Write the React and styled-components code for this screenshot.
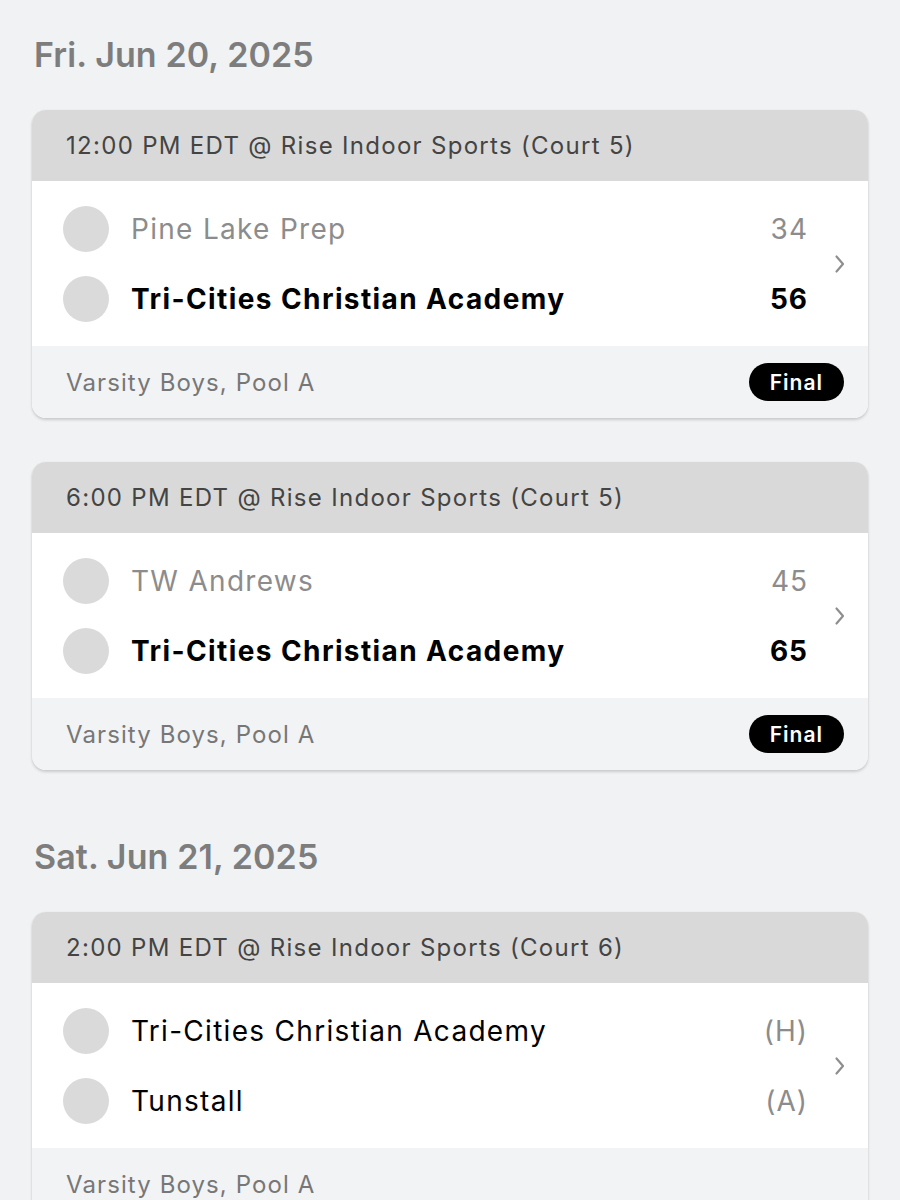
import React from 'react';
import styled, { createGlobalStyle } from 'styled-components';

const GlobalStyle = createGlobalStyle`
  html, body {
    margin: 0;
    padding: 0;
    background: #f1f2f4;
    font-family: 'Inter', 'Liberation Sans', sans-serif;
  }
`;

const Page = styled.div`
  display: flex;
  flex-direction: column;
  gap: 67px;
  padding: 35px 32px 40px 32px;
`;

const Day = styled.section`
  display: flex;
  flex-direction: column;
`;

const DayTitle = styled.h2`
  margin: 0 0 35px 2px;
  font-size: 34px;
  line-height: 40px;
  font-weight: 600;
  color: #7d7d7d;
  letter-spacing: 0.1px;
`;

const CardList = styled.div`
  display: flex;
  flex-direction: column;
  gap: 44px;
`;

const Card = styled.div`
  border-radius: 14px;
  overflow: hidden;
  background: #fff;
  box-shadow: 0 2px 3px rgba(0, 0, 0, 0.16), 0 0 1px rgba(0, 0, 0, 0.12);
`;

const CardHeader = styled.div`
  display: flex;
  align-items: center;
  height: 71px;
  padding: 0 34px;
  background: #d9d9d9;
  color: #444;
  font-size: 24px;
  letter-spacing: 1.3px;
`;

const CardBody = styled.div`
  display: flex;
  align-items: center;
  padding: 25px 0 24px 31px;
`;

const Teams = styled.div`
  flex: 1;
  display: flex;
  flex-direction: column;
  gap: 24px;
`;

const TeamRow = styled.div`
  display: flex;
  align-items: center;
  height: 46px;
`;

const Logo = styled.div`
  width: 46px;
  height: 46px;
  border-radius: 50%;
  background: #dadada;
  flex-shrink: 0;
`;

const TeamName = styled.div`
  flex: 1;
  margin-left: 22px;
  font-size: 28px;
  letter-spacing: ${(p) => (p.$strong ? '1.4px' : '1.3px')};
  font-weight: ${(p) => (p.$strong ? 700 : 400)};
  color: ${(p) => (p.$muted ? '#8c8c8c' : '#000')};
`;

const Score = styled.div`
  margin-right: 4px;
  font-size: 28px;
  letter-spacing: 1px;
  font-weight: ${(p) => (p.$strong ? 700 : 400)};
  color: ${(p) => (p.$muted ? '#8c8c8c' : '#000')};
`;

const Chevron = styled.div`
  width: 56px;
  display: flex;
  justify-content: center;
`;

const CardFooter = styled.div`
  display: flex;
  align-items: center;
  justify-content: space-between;
  height: 72px;
  padding: 0 24px 0 34px;
  background: #f2f3f5;
  color: #777;
  font-size: 24px;
  letter-spacing: 1.1px;
`;

const Badge = styled.span`
  background: #000;
  color: #fff;
  font-weight: 600;
  font-size: 21px;
  letter-spacing: 1px;
  border-radius: 19px;
  height: 38px;
  padding: 0 21px;
  display: flex;
  align-items: center;
`;

const ChevronIcon = () => (
  <svg width="14" height="22" viewBox="0 0 14 22">
    <path d="M3.5 3.5 L10 11 L3.5 18.5" fill="none" stroke="#8e8e8e" strokeWidth="2.2" strokeLinecap="round" strokeLinejoin="round" />
  </svg>
);

const days = [
  {
    date: 'Fri. Jun 20, 2025',
    games: [
      {
        when: '12:00 PM EDT @ Rise Indoor Sports (Court 5)',
        teams: [
          { name: 'Pine Lake Prep', score: '34', win: false },
          { name: 'Tri-Cities Christian Academy', score: '56', win: true },
        ],
        division: 'Varsity Boys, Pool A',
        status: 'Final',
      },
      {
        when: '6:00 PM EDT @ Rise Indoor Sports (Court 5)',
        teams: [
          { name: 'TW Andrews', score: '45', win: false },
          { name: 'Tri-Cities Christian Academy', score: '65', win: true },
        ],
        division: 'Varsity Boys, Pool A',
        status: 'Final',
      },
    ],
  },
  {
    date: 'Sat. Jun 21, 2025',
    games: [
      {
        when: '2:00 PM EDT @ Rise Indoor Sports (Court 6)',
        teams: [
          { name: 'Tri-Cities Christian Academy', score: '(H)' },
          { name: 'Tunstall', score: '(A)' },
        ],
        division: 'Varsity Boys, Pool A',
      },
    ],
  },
];

const Game = ({ game }) => (
  <Card>
    <CardHeader>{game.when}</CardHeader>
    <CardBody>
      <Teams>
        {game.teams.map((t) => {
          const played = t.win !== undefined;
          return (
            <TeamRow key={t.name}>
              <Logo />
              <TeamName $strong={played && t.win} $muted={played && !t.win}>
                {t.name}
              </TeamName>
              <Score $strong={played && t.win} $muted={!played || !t.win}>
                {t.score}
              </Score>
            </TeamRow>
          );
        })}
      </Teams>
      <Chevron>
        <ChevronIcon />
      </Chevron>
    </CardBody>
    <CardFooter>
      <span>{game.division}</span>
      {game.status && <Badge>{game.status}</Badge>}
    </CardFooter>
  </Card>
);

export default function App() {
  return (
    <>
      <GlobalStyle />
      <Page>
        {days.map((d) => (
          <Day key={d.date}>
            <DayTitle>{d.date}</DayTitle>
            <CardList>
              {d.games.map((g) => (
                <Game key={g.when} game={g} />
              ))}
            </CardList>
          </Day>
        ))}
      </Page>
    </>
  );
}
